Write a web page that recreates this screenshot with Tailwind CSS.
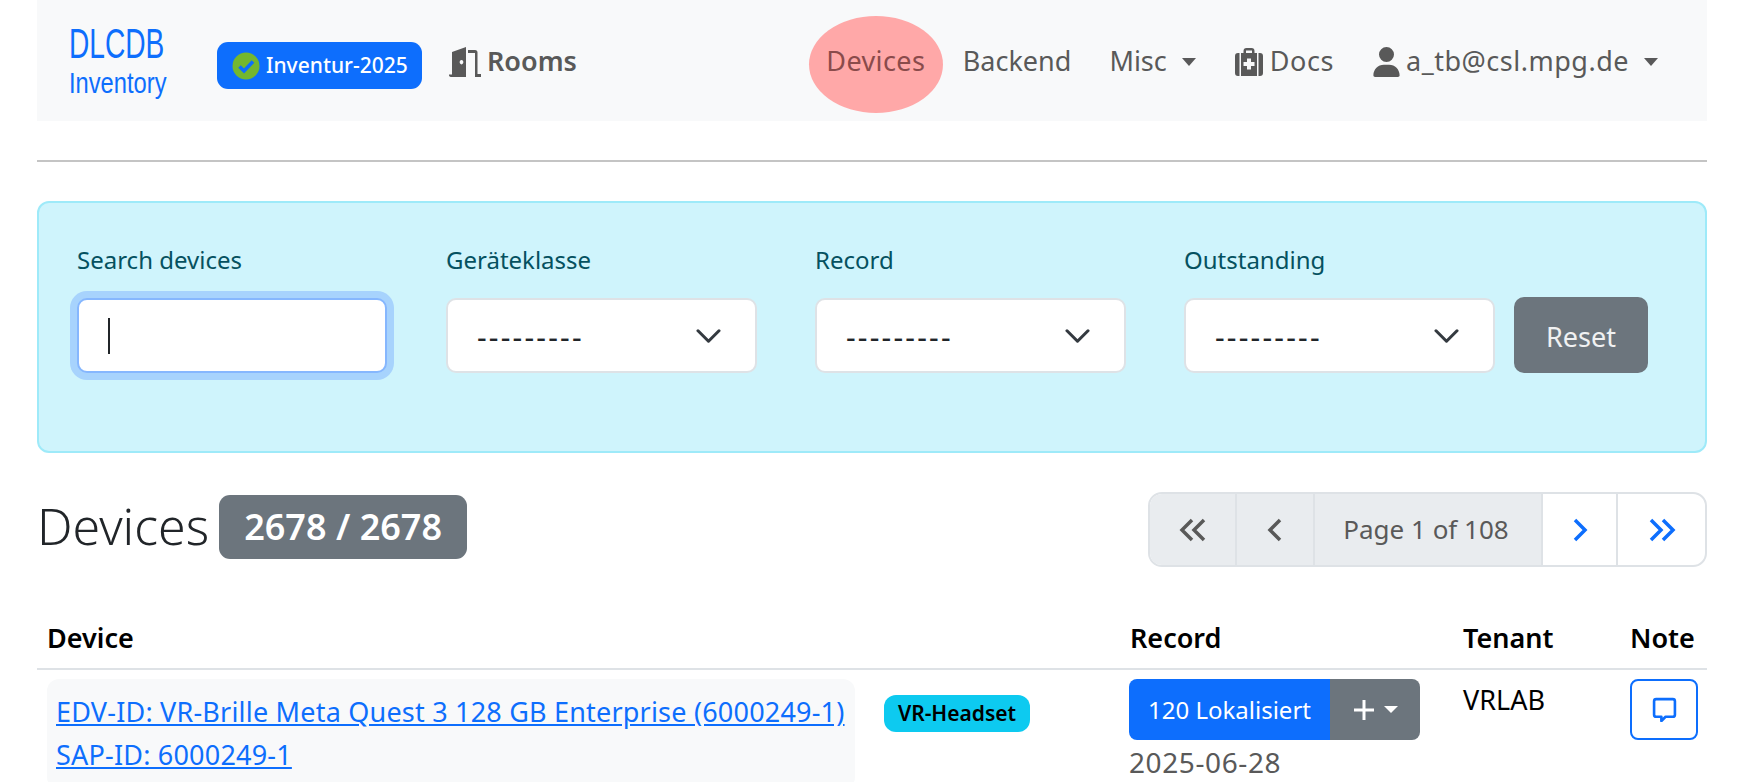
<!DOCTYPE html>
<html lang="de">
<head>
<meta charset="UTF-8">
<title>DLCDB Inventory</title>
<script src="https://cdn.jsdelivr.net/npm/@tailwindcss/browser@4"></script>
</head>
<body class="h-[782px] overflow-hidden bg-white font-['Noto_Sans',sans-serif] text-[27px] text-[#212529]">
  <div class="pl-[37px] pr-[45px]">
    <!-- Navbar -->
    <nav class="flex h-[121px] items-center bg-[#f8f9fa] pl-[32px] text-[#595959]">
      <a class="flex w-[148px] flex-col font-['Liberation_Sans',sans-serif] text-[#0d6efd]">
        <span class="origin-left scale-x-[0.67] text-[42px] leading-[44px]">DLCDB</span>
        <span class="origin-left scale-x-[0.79] text-[30px] leading-[34px]">Inventory</span>
      </a>
      <span class="mt-[10px] flex h-[47px] w-[205px] items-center gap-[6px] rounded-[11px] bg-[#0d6efd] pl-[15px] text-[21px] font-medium text-white">
        <svg class="h-[28px] w-[28px]" viewBox="0 0 28 28"><circle cx="14" cy="14" r="13.5" fill="#74b72e"/><path d="M7.500 14.500l4.500 4.500 9-9.500" fill="none" stroke="#0d6efd" stroke-width="3.600"/></svg>
        Inventur-2025
      </span>
      <a class="ml-[27px] flex items-center gap-[6px] pt-[2px] font-semibold">
        <svg class="h-[30px] w-[32px]" viewBox="0 0 32 30" fill="#595959"><path d="M0 27.500h3V5l14-5v30H2a2 2 0 0 1-2-2.500zM12.500 13a1.800 2.200 0 1 0 .01 0z" fill-rule="evenodd"/><path d="M19 3h7a2.500 2.500 0 0 1 2.500 2.500V27H32v3h-6V6h-7z"/></svg>
        Rooms
      </a>
      <div class="ml-auto flex items-center pr-[49px] pt-[2px]">
        <a class="mt-[6px] flex h-[97px] w-[134px] items-center justify-center rounded-[50%] bg-[#ffa8a8] pb-[6px] tracking-[0.4px] text-[#8a4b4b]">Devices</a>
        <a class="ml-[20px]">Backend</a>
        <a class="ml-[38px] flex items-center gap-[15px]">Misc <span class="h-0 w-0 border-x-[7px] border-t-[8px] border-x-transparent border-t-[#595959]"></span></a>
        <a class="ml-[39px] flex items-center gap-[7px] tracking-[0.6px]">
          <svg class="h-[28px] w-[28px]" viewBox="0 0 28 28" fill="#595959"><path fill-rule="evenodd" d="M8.500 5V3a3 3 0 0 1 3-3h5a3 3 0 0 1 3 3v2H22v23H6V5zM11 5h6V2.500h-6zM12 10.500v3.500H8.500v4H12v3.500h4V18h3.500v-4H16v-3.500z"/><path d="M0 8a3 3 0 0 1 3-3h1.500v23H3a3 3 0 0 1-3-3zM23.500 5H25a3 3 0 0 1 3 3v17a3 3 0 0 1-3 3h-1.500z"/></svg>
          Docs
        </a>
        <a class="ml-[39px] flex items-center gap-[6px] tracking-[0.5px]">
          <svg class="h-[30px] w-[27px]" viewBox="0 0 448 512" fill="#595959"><path d="M224 256A128 128 0 1 0 224 0a128 128 0 1 0 0 256zm-45.700 48C79.800 304 0 383.800 0 482.300 0 498.700 13.300 512 29.700 512h388.600c16.400 0 29.700-13.300 29.700-29.700C448 383.800 368.200 304 269.700 304z"/></svg>
          a_tb@csl.mpg.de
          <span class="ml-[9px] h-0 w-0 border-x-[7px] border-t-[8px] border-x-transparent border-t-[#595959]"></span>
        </a>
      </div>
    </nav>

    <hr class="mt-[39px] border-t-2 border-[#c4c4c4]">

    <!-- Filter -->
    <div class="mt-[39px] h-[252px] rounded-[12px] border-2 border-[#9eeaf9] bg-[#cff4fc] pl-[38px] pt-[38px] text-[24px] text-[#055160]">
      <div class="flex items-end">
        <div class="w-[310px]">
          <div class="mb-[20px] leading-[37px]">Search devices</div>
          <div class="flex h-[75px] items-center rounded-[10px] border-2 border-[#86b7fe] bg-white pl-[29px] shadow-[0_0_0_7px_#a7d3fd]"><span class="h-[36px] w-[2px] bg-[#212529]"></span></div>
        </div>
        <div class="ml-[59px] w-[311px]">
          <div class="mb-[20px] leading-[37px]">Geräteklasse</div>
          <div class="flex h-[75px] items-center justify-between rounded-[10px] border-2 border-[#dee2e6] bg-white pl-[29px] pr-[34px] text-[30px] tracking-[2.200px] text-[#212529]"><span class="pt-[2px]">---------</span>
            <svg class="h-[14px] w-[25px]" viewBox="0 0 28 16" fill="none" stroke="#343a40" stroke-width="3.500" stroke-linecap="round" stroke-linejoin="round"><path d="M2 2l12 12L26 2"/></svg>
          </div>
        </div>
        <div class="ml-[58px] w-[311px]">
          <div class="mb-[20px] leading-[37px]">Record</div>
          <div class="flex h-[75px] items-center justify-between rounded-[10px] border-2 border-[#dee2e6] bg-white pl-[29px] pr-[34px] text-[30px] tracking-[2.200px] text-[#212529]"><span class="pt-[2px]">---------</span>
            <svg class="h-[14px] w-[25px]" viewBox="0 0 28 16" fill="none" stroke="#343a40" stroke-width="3.500" stroke-linecap="round" stroke-linejoin="round"><path d="M2 2l12 12L26 2"/></svg>
          </div>
        </div>
        <div class="ml-[58px] w-[311px]">
          <div class="mb-[20px] leading-[37px]">Outstanding</div>
          <div class="flex h-[75px] items-center justify-between rounded-[10px] border-2 border-[#dee2e6] bg-white pl-[29px] pr-[34px] text-[30px] tracking-[2.200px] text-[#212529]"><span class="pt-[2px]">---------</span>
            <svg class="h-[14px] w-[25px]" viewBox="0 0 28 16" fill="none" stroke="#343a40" stroke-width="3.500" stroke-linecap="round" stroke-linejoin="round"><path d="M2 2l12 12L26 2"/></svg>
          </div>
        </div>
        <button class="ml-[19px] h-[76px] w-[134px] rounded-[10px] bg-[#6c757d] pt-[4px] text-[27px] text-white/90">Reset</button>
      </div>
    </div>

    <!-- Heading + pagination -->
    <div class="mt-[39px] flex h-[75px] items-center justify-between">
      <div class="mb-[6px] flex items-center">
        <h1 class="text-[50px] font-light">Devices</h1>
        <span class="ml-[10px] flex h-[64px] w-[248px] items-center justify-center rounded-[11px] bg-[#6c757d] text-[36px] font-semibold text-white">2678 / 2678</span>
      </div>
      <div class="flex h-[75px] w-[559px] overflow-hidden rounded-[14px] border-2 border-[#dee2e6] text-[#595959]">
        <span class="flex w-[87px] items-center justify-center border-r-2 border-[#dee2e6] bg-[#e9ecef]">
          <svg class="h-[24px] w-[28px]" viewBox="0 0 28 24" fill="none" stroke="#595959" stroke-width="3.500"><path d="M13 2L3 12l10 10M25 2L15 12l10 10"/></svg>
        </span>
        <span class="flex w-[78px] items-center justify-center border-r-2 border-[#dee2e6] bg-[#e9ecef]">
          <svg class="h-[24px] w-[16px]" viewBox="0 0 16 24" fill="none" stroke="#595959" stroke-width="3.500"><path d="M13 2L3 12l10 10"/></svg>
        </span>
        <span class="flex w-[226px] items-center justify-center bg-[#e9ecef] pr-[4px] text-[26px]">Page 1 of 108</span>
        <span class="flex w-[77px] items-center justify-center border-x-2 border-[#dee2e6]">
          <svg class="h-[24px] w-[16px]" viewBox="0 0 16 24" fill="none" stroke="#0d6efd" stroke-width="3.500"><path d="M3 2l10 10L3 22"/></svg>
        </span>
        <span class="flex flex-1 items-center justify-center">
          <svg class="h-[24px] w-[28px]" viewBox="0 0 28 24" fill="none" stroke="#0d6efd" stroke-width="3.500"><path d="M3 2l10 10L3 22M15 2l10 10-10 10"/></svg>
        </span>
      </div>
    </div>

    <!-- Table -->
    <div class="mt-[50px] grid grid-cols-[1083px_333px_167px_1fr] border-b-2 border-[#dee2e6] pb-[9px] font-semibold leading-[42px] text-black">
      <div class="pl-[10px]">Device</div>
      <div class="pl-[10px]">Record</div>
      <div class="pl-[10px]">Tenant</div>
      <div class="pl-[10px]">Note</div>
    </div>
    <div class="mt-[9px] grid grid-cols-[1083px_333px_167px_1fr]">
      <div class="flex pl-[10px]">
        <div class="h-[110px] w-[808px] rounded-[12px] bg-[#f8f9fa] pl-[9px] pt-[11px] tracking-[0.2px] text-[#0d6efd]">
          <a class="block leading-[43px] underline">EDV-ID: VR-Brille Meta Quest 3 128 GB Enterprise (6000249-1)</a>
          <a class="block leading-[43px] underline">SAP-ID: 6000249-1</a>
        </div>
        <span class="ml-[29px] mt-[16px] flex h-[37px] w-[146px] items-center justify-center rounded-[12px] bg-[#0dcaf0] text-[21px] font-semibold text-black">VR-Headset</span>
      </div>
      <div class="pl-[9px]">
        <div class="flex h-[61px] w-[291px] overflow-hidden rounded-[8px] text-white">
          <span class="flex w-[201px] items-center justify-center bg-[#0d6efd] text-[24px]">120 Lokalisiert</span>
          <span class="flex flex-1 items-center justify-center gap-[8px] bg-[#6c757d]">
            <svg class="h-[24px] w-[24px]" viewBox="0 0 24 24" stroke="#fff" stroke-width="3"><path d="M12 2v20M2 12h20"/></svg>
            <span class="h-0 w-0 border-x-[7px] border-t-[7px] border-x-transparent border-t-white"></span>
          </span>
        </div>
        <div class="mt-[6px] text-[28px] leading-[32px] tracking-[0.6px] text-[#595959]">2025-06-28</div>
      </div>
      <div class="pl-[10px] pt-[1px] leading-[40px] text-black">VRLAB</div>
      <div class="pl-[10px]">
        <button class="flex h-[61px] w-[68px] items-center justify-center rounded-[8px] border-2 border-[#0d6efd]">
          <svg class="h-[25px] w-[25px]" viewBox="0 0 24 24" fill="none" stroke="#0d6efd" stroke-width="2.500" stroke-linejoin="round"><path d="M4 2h16a2 2 0 0 1 2 2v13a2 2 0 0 1-2 2h-7l-4 4v-4H4a2 2 0 0 1-2-2V4a2 2 0 0 1 2-2z"/></svg>
        </button>
      </div>
    </div>
  </div>
</body>
</html>
